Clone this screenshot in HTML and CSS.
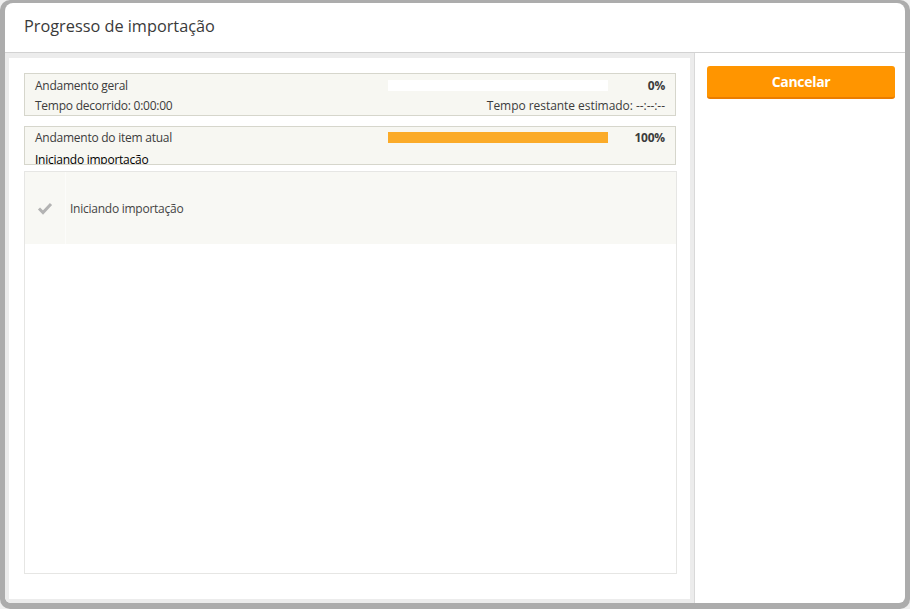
FILE: index.html
```html
<!DOCTYPE html>
<html lang="pt">
<head>
<meta charset="utf-8">
<title>Progresso de importação</title>
<link rel="stylesheet" href="styles.css">
</head>
<body>
<div class="frame">
  <div class="window">
    <header class="header">
      <h1 class="title">Progresso de importação</h1>
    </header>
    <div class="body">
      <div class="left">
        <div class="inner">
          <div class="box box-general">
            <div class="row">
              <span class="label">Andamento geral</span>
              <div class="bar"><div class="fill" style="width:0%"></div></div>
              <span class="pct">0%</span>
            </div>
            <div class="row">
              <span class="label">Tempo decorrido: 0:00:00</span>
              <span class="eta">Tempo restante estimado: --:--:--</span>
            </div>
          </div>
          <div class="box box-item">
            <div class="row">
              <span class="label">Andamento do item atual</span>
              <div class="bar"><div class="fill" style="width:100%"></div></div>
              <span class="pct">100%</span>
            </div>
            <div class="row row-status">
              <span class="label dark">Iniciando importação</span>
            </div>
          </div>
          <div class="list">
            <div class="item">
              <div class="icon-cell">
                <svg width="16" height="14" viewBox="0 0 16 14"><path d="M2 7.5 L6 11.5 L14 3" fill="none" stroke="#b3b3b3" stroke-width="3"/></svg>
              </div>
              <div class="item-text">Iniciando importação</div>
            </div>
          </div>
        </div>
      </div>
      <div class="right">
        <button class="btn-cancel">Cancelar</button>
      </div>
    </div>
  </div>
</div>
</body>
</html>
```
FILE: styles.css
```css
html, body {
  margin: 0;
  padding: 0;
  background: #efefef;
}
body {
  font-family: "Open Sans", "Noto Sans", sans-serif;
  width: 910px;
  height: 609px;
  overflow: hidden;
}
.frame {
  box-sizing: border-box;
  width: 910px;
  height: 609px;
  background: #acacac;
  border-radius: 10px;
  padding: 3px 5px 6px 5px;
}
.window {
  height: 100%;
  background: #fff;
  border-radius: 8px 8px 6px 6px;
  display: flex;
  flex-direction: column;
  overflow: hidden;
}
.header {
  height: 49px;
  border-bottom: 1px solid #d2d2d2;
  display: flex;
  align-items: center;
  padding-left: 19px;
  flex: none;
}
.title {
  margin: 0 0 3px 0;
  font-size: 16.3px;
  font-weight: 400;
  color: #3a3a3a;
}
.body {
  flex: 1;
  display: flex;
  min-height: 0;
}
.left {
  width: 690px;
  box-sizing: border-box;
  background: #ececec;
  padding: 5px 4px 4px 4px;
  border-right: 1px solid #d9d9d9;
  display: flex;
}
.inner {
  flex: 1;
  background: #fff;
  padding: 15px 5px 25px 15px;
  display: flex;
  flex-direction: column;
}
.box {
  box-sizing: border-box;
  width: 652px;
  background: #f7f7f2;
  border: 1px solid #d6d6cc;
  padding: 1px 10px 0 10px;
  overflow: hidden;
  font-size: 12px;
  color: #3c3c3c;
}
.box-general { height: 43px; }
.box-item { height: 39px; margin-top: 10px; padding-top: 0; }
.row {
  display: flex;
  align-items: center;
  height: 20px;
}
.row-status { padding-top: 2px; }
.label {
  flex: 1;
  white-space: nowrap;
  letter-spacing: -0.25px;
}
.label.dark { color: #000; }
.bar {
  width: 220px;
  height: 11px;
  background: #fff;
}
.fill {
  height: 100%;
  background: #fbab29;
}
.pct {
  width: 57px;
  text-align: right;
  font-weight: 700;
  letter-spacing: -0.2px;
}
.eta {
  white-space: nowrap;
  letter-spacing: -0.05px;
}
.list {
  margin-top: 6px;
  width: 653px;
  box-sizing: border-box;
  flex: 1;
  border: 1px solid #e6e6e4;
}
.item {
  display: flex;
  height: 72px;
  background: #f8f8f4;
  font-size: 12px;
  color: #444;
}
.icon-cell {
  width: 40px;
  border-right: 1px solid #fcfcfa;
  display: flex;
  align-items: center;
  justify-content: center;
}
.item-text {
  display: flex;
  align-items: center;
  padding-left: 4px;
  letter-spacing: -0.25px;
}
.right {
  flex: 1;
  padding: 13px 10px 0 12px;
}
.btn-cancel {
  display: block;
  width: 188px;
  height: 33px;
  background: #ff9500;
  border: none;
  border-bottom: 2px solid #ea7d00;
  border-radius: 3px;
  color: #fff;
  font-family: "Open Sans", "Noto Sans", sans-serif;
  font-weight: 700;
  font-size: 14px;
  letter-spacing: -0.3px;
  padding: 0;
  cursor: pointer;
}
```
